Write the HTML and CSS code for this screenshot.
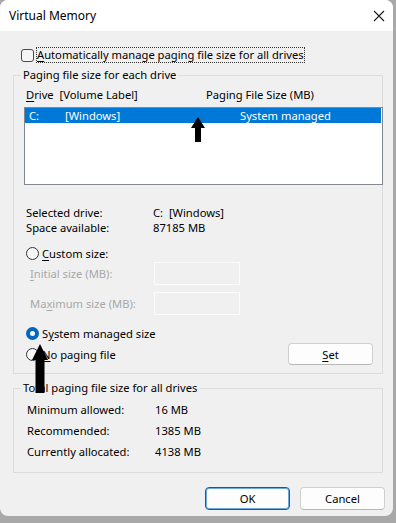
FILE: index.html
```html
<!DOCTYPE html>
<html>
<head>
<meta charset="utf-8">
<link rel="stylesheet" href="styles.css">
</head>
<body>
<div class="window">
  <div class="titlebar">
    <span class="title">Virtual Memory</span>
    <svg class="close" width="12" height="12" viewBox="0 0 12 12"><path d="M1 1 L11 11 M11 1 L1 11" stroke="#1a1a1a" stroke-width="1.1" fill="none"/></svg>
  </div>
  <div class="content">
    <div class="check-row">
      <span class="checkbox"></span>
      <span class="focus"><u>A</u>utomatically manage paging file size for all drives</span>
    </div>

    <fieldset class="group group1">
      <legend>Paging file size for each drive</legend>
      <div class="list-head">
        <span class="col-drive"><u>D</u>rive&nbsp; [Volume Label]</span>
        <span class="col-size">Paging File Size (MB)</span>
      </div>
      <div class="listbox">
        <div class="list-row selected">
          <span class="c1">C:</span>
          <span class="c2">[Windows]</span>
          <span class="c3">System managed</span>
        </div>
      </div>

      <div class="info">
        <div class="info-row"><span class="lbl">Selected drive:</span><span>C:&nbsp; [Windows]</span></div>
        <div class="info-row"><span class="lbl">Space available:</span><span>87185 MB</span></div>
      </div>

      <div class="radio-row custom">
        <span class="radio"></span><span><u>C</u>ustom size:</span>
      </div>
      <div class="field-row first">
        <span class="field-lbl disabled"><u>I</u>nitial size (MB):</span>
        <span class="input"></span>
      </div>
      <div class="field-row second">
        <span class="field-lbl disabled">Ma<u>x</u>imum size (MB):</span>
        <span class="input"></span>
      </div>
      <div class="radio-row sysman">
        <span class="radio on"></span><span>S<u>y</u>stem managed size</span>
      </div>
      <div class="radio-row nopage">
        <span class="radio"></span><span><u>N</u>o paging file</span>
        <span class="btn set-btn"><u>S</u>et</span>
      </div>
    </fieldset>

    <fieldset class="group group2">
      <legend>Total paging file size for all drives</legend>
      <div class="total-row"><span class="tlbl">Minimum allowed:</span><span>16 MB</span></div>
      <div class="total-row"><span class="tlbl">Recommended:</span><span>1385 MB</span></div>
      <div class="total-row"><span class="tlbl">Currently allocated:</span><span>4138 MB</span></div>
    </fieldset>

    <div class="buttons">
      <span class="btn default">OK</span>
      <span class="btn">Cancel</span>
    </div>
  </div>

  <svg class="arrow arrow1" width="16" height="26" viewBox="0 0 16 26"><path d="M8 0 L15 11 L11 11 L11 25 L5 25 L5 11 L1 11 Z" fill="#000"/></svg>
  <svg class="arrow arrow2" width="18" height="50" viewBox="0 0 18 50"><path d="M9 0 L17 16 L13.5 16 L13.5 49 L4.5 49 L4.5 16 L1 16 Z" fill="#000"/></svg>
</div>
</body>
</html>
```

FILE: styles.css
```css
html, body {
  margin: 0;
  padding: 0;
}
body {
  background: #a8a8a8;
  font-family: "Noto Sans", "Open Sans", sans-serif;
  font-size: 11.2px;
  color: #000;
}
.window {
  position: relative;
  width: 393px;
  height: 516px;
  background: #f0f0f0;
  border-radius: 8px;
  overflow: hidden;
}
.titlebar {
  height: 31px;
  background: #fff;
  display: flex;
  align-items: center;
  justify-content: space-between;
  padding: 0 8px 0 9px;
}
.title {
  font-size: 12px;
}
.close {
  display: block;
}
.content {
  padding: 16px 0 0 13px;
}
u {
  text-decoration: underline;
  text-underline-offset: 2px;
}
.check-row {
  display: flex;
  align-items: center;
  height: 16px;
  margin-left: 8px;
}
.checkbox {
  width: 11px;
  height: 11px;
  border: 1px solid #4a4a4a;
  border-radius: 3px;
  background: #f6f6f6;
  margin-right: 2px;
}
.focus {
  border: 1px dotted #333;
  line-height: 14px;
}
.group {
  margin: 4px 0 0 0;
  padding: 0;
  width: 370px;
  box-sizing: border-box;
  border: 1px solid #dcdcdc;
  border-radius: 0;
  min-width: 0;
}
.group legend {
  margin-left: 7px;
  padding: 0 2px;
  line-height: 16px;
}
.list-head {
  display: flex;
  height: 14px;
  line-height: 14px;
  margin-top: 5px;
  padding-left: 12px;
}
.col-drive {
  width: 180px;
}
.listbox {
  margin: 5px 0 0 10px;
  width: 359px;
  height: 78px;
  box-sizing: border-box;
  border: 1px solid #828790;
  background: #fff;
}
.list-row {
  display: flex;
  height: 15px;
  line-height: 15px;
  margin-right: 1px;
}
.list-row.selected {
  background: #0078d7;
  color: #fff;
}
.c1 {
  width: 36px;
  padding-left: 4px;
}
.c2 {
  width: 175px;
}
.info {
  margin-top: 20px;
}
.info-row {
  display: flex;
  line-height: 15px;
  padding-left: 12px;
}
.lbl {
  width: 127px;
}
.radio-row {
  display: flex;
  align-items: center;
  padding-left: 12px;
}
.radio {
  width: 11px;
  height: 11px;
  border: 1px solid #333;
  border-radius: 50%;
  margin-right: 3px;
  background: #f6f6f6;
  box-sizing: content-box;
}
.radio.on {
  width: 5px;
  height: 5px;
  border: 4px solid #0067c0;
  background: #fff;
}
.custom {
  margin-top: 10px;
  height: 16px;
}
.field-row {
  display: flex;
  align-items: center;
  height: 24px;
  padding-left: 16px;
}
.field-row.second {
  margin-top: 6px;
}
.field-lbl {
  width: 124px;
}
.disabled {
  color: #a8a8a8;
}
.input {
  width: 86px;
  height: 23px;
  border: 1px solid #fbfbfb;
  box-sizing: border-box;
  background: #f0f0f0;
}
.sysman {
  margin-top: 10px;
  height: 16px;
}
.nopage {
  margin-top: 2px;
  height: 22px;
  margin-bottom: 8px;
}
.btn {
  display: flex;
  align-items: center;
  justify-content: center;
  width: 85px;
  height: 22px;
  box-sizing: border-box;
  border: 1px solid #d0d0d0;
  border-bottom-color: #b8b8b8;
  border-radius: 4px;
  background: #fdfdfd;
}
.set-btn {
  margin-left: auto;
  margin-right: 9px;
}
.group2 {
  margin-top: 6px;
  padding-bottom: 10px;
}
.total-row {
  display: flex;
  line-height: 21px;
  padding-left: 13px;
}
.group2 legend + .total-row {
  margin-top: 3px;
}
.tlbl {
  width: 128px;
}
.buttons {
  display: flex;
  justify-content: flex-end;
  gap: 10px;
  width: 372px;
  margin-top: 14px;
}
.buttons .btn {
  height: 23px;
}
.btn.default {
  border: 1px solid #005fb8;
  box-shadow: inset 0 0 0 1px #6ea8dc;
}
.arrow {
  position: absolute;
}
.arrow1 {
  left: 190px;
  top: 117px;
}
.arrow2 {
  left: 31px;
  top: 344px;
}
```
